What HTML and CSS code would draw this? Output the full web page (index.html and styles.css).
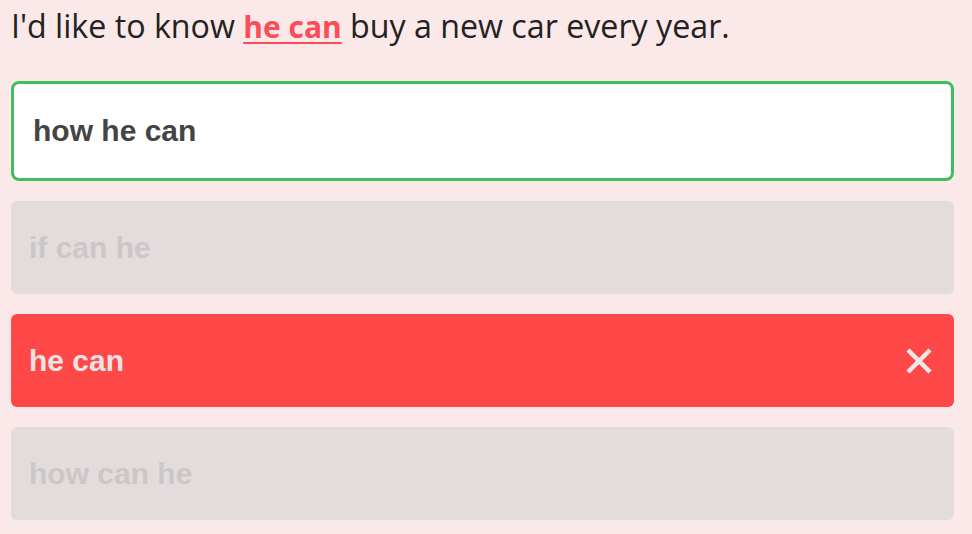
FILE: index.html
```html
<!DOCTYPE html>
<html>
<head>
<meta charset="utf-8">
<link rel="stylesheet" href="styles.css">
</head>
<body>
<div class="quiz">
  <p class="sentence">I'd like to know <span class="blank">he can</span> buy a new car every year.</p>
  <div class="options">
    <div class="option selected">how he can</div>
    <div class="option muted">if can he</div>
    <div class="option wrong"><span>he can</span>
      <svg class="x" width="28" height="28" viewBox="0 0 28 28"><path d="M3 3 L25 25 M25 3 L3 25" stroke="#f2eaea" stroke-width="4.5" stroke-linecap="butt"/></svg>
    </div>
    <div class="option muted">how can he</div>
  </div>
</div>
</body>
</html>
```
FILE: styles.css
```css
html, body {
  margin: 0;
  padding: 0;
  background: #fbe9e9;
}
.quiz {
  padding: 0 18px 0 11px;
}
.sentence {
  margin: 0;
  padding-top: 4px;
  font-family: "Open Sans", sans-serif;
  font-size: 32.2px;
  line-height: 44px;
  color: #222;
}
.blank {
  color: #ff4b57;
  font-weight: 700;
  font-size: 30px;
  line-height: 30px;
  text-decoration: underline;
  text-decoration-thickness: 2px;
  text-underline-offset: 4px;
}
.options {
  margin-top: 33px;
  display: flex;
  flex-direction: column;
  gap: 20px;
}
.option {
  box-sizing: border-box;
  height: 93px;
  border-radius: 6px;
  display: flex;
  align-items: center;
  justify-content: space-between;
  padding: 0 21px 0 18px;
  font-family: "Liberation Sans", Arial, sans-serif;
  font-weight: bold;
  font-size: 30px;
}
.option.selected {
  height: 100px;
  background: #fff;
  border: 3px solid #3dbf5c;
  color: #444;
  padding-left: 19px;
  border-radius: 8px;
}
.option.muted {
  background: #e2dcdc;
  color: #cdc6c6;
}
.option.wrong {
  background: #ff4848;
  color: #ebe3e3;
}
.x {
  display: block;
}
```
